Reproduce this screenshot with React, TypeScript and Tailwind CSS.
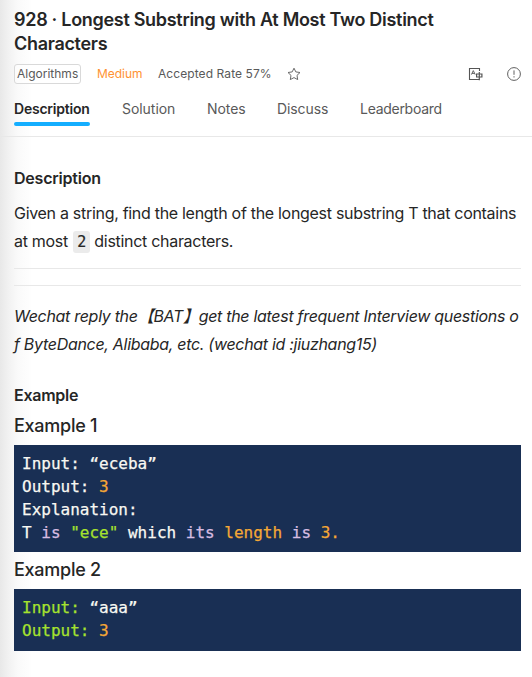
import React from "react";

const tabs = [
  { name: "Solution", cls: "ml-8 w-[53px] tracking-[-0.05px]" },
  { name: "Notes", cls: "ml-8 w-[38px] tracking-[-0.05px]" },
  { name: "Discuss", cls: "ml-8 w-[51px] tracking-[-0.1px]" },
  { name: "Leaderboard", cls: "ml-8 w-[82px] tracking-[-0.28px]" },
];

function StarIcon() {
  return (
    <svg className="ml-[15px] h-[14px] w-[14px]" viewBox="0 0 14 14" fill="none" stroke="#6a6a6a" strokeWidth="1" strokeLinejoin="miter">
      <path d="M7 1.2 8.8 4.9 13 5.5 10 8.4 10.7 12.6 7 10.6 3.3 12.6 4 8.4 1 5.5 5.2 4.9Z" />
    </svg>
  );
}

function TranslateIcon() {
  return (
    <svg className="h-[16px] w-[16px]" viewBox="0 0 16 16" fill="none" stroke="#555">
      <path d="M12.5 5V2.5H2.5v11h10" strokeWidth="1.1" />
      <path d="M4.4 8.6 6.3 4.6 8.2 8.6M5 7.4h2.6" strokeWidth="0.9" />
      <path d="M9.6 8h5.3v3H9.6ZM12.3 6v8.2" strokeWidth="1.2" />
    </svg>
  );
}

function NoticeIcon() {
  return (
    <svg className="ml-[23px] h-[16px] w-[16px]" viewBox="0 0 16 16" fill="none" stroke="#606060">
      <circle cx="8" cy="8" r="6.4" strokeWidth="1" />
      <path d="M8 4.4v4.4M8 10.2v1.3" strokeWidth="1" />
    </svg>
  );
}

export default function App() {
  return (
    <div className="h-[677px] w-[532px] overflow-hidden whitespace-nowrap bg-[linear-gradient(to_right,#e8e8e8_0px,#f2f2f2_9px,#fafafa_18px,#fdfdfd_28px,#ffffff_32px)] font-['Inter','Noto_Sans_CJK_SC',sans-serif] text-[#262626]">
      <header className="flex h-[137px] flex-col border-b border-[#e8e8e8] pl-[14px] pt-2">
        <h1 className="text-[18px] font-semibold leading-6 tracking-[-0.3px]">
          928 · Longest Substring with At Most Two Distinct
          <br />
          Characters
        </h1>
        <div className="mt-2 flex h-5 items-center text-[12px] text-[#595959]">
          <span className="flex h-5 w-[67px] items-center rounded-[3px] border border-[#d9d9d9] bg-white/50 pl-[2px]">
            Algorithms
          </span>
          <span className="ml-4 w-[46px] tracking-[-0.05px] text-[#ff9232]">Medium</span>
          <span className="ml-[15px] w-[114px] tracking-[0.08px]">Accepted Rate 57%</span>
          <StarIcon />
          <div className="ml-auto mr-[10px] flex items-center">
            <TranslateIcon />
            <NoticeIcon />
          </div>
        </div>
        <nav className="mt-[15px] flex text-[14px] leading-5 text-[#595959]">
          <div className="w-[76px]">
            <span className="font-semibold text-[#262626] tracking-[-0.22px]">Description</span>
            <div className="mt-[3px] h-1 rounded-full bg-[#14aeff]" />
          </div>
          {tabs.map((tab) => (
            <span key={tab.name} className={tab.cls}>{tab.name}</span>
          ))}
        </nav>
      </header>

      <main className="pl-[14px] pr-[11px] pt-[29px]">
        <h2 className="text-[16px] font-semibold leading-6 tracking-[-0.22px]">Description</h2>
        <p className="mt-[9px] text-[16px] leading-7 tracking-[-0.3px]">
          Given a string, find the length of the longest substring T that contains
          <br />
          at most{" "}
          <code className="ml-[1px] rounded-[3px] bg-[#ebebeb] px-[4px] py-[2px] font-['DejaVu_Sans_Mono',monospace] text-[15px] tracking-normal [-webkit-text-stroke:0.2px]">2</code>{" "}
          distinct characters.
        </p>
        <div className="mt-3 h-[18px] border-y border-[#e8e8e8]" />
        <p className="mt-4 text-[16px] italic leading-7 tracking-[-0.3px]">
          Wechat reply the【BAT】get the latest frequent Interview questions o
          <br />
          f ByteDance, Alibaba, etc. (wechat id :jiuzhang15)
        </p>
        <h2 className="mt-[25px] text-[16px] font-semibold leading-6 tracking-[-0.25px]">Example</h2>
        <h3 className="mt-[7px] text-[18px] font-medium leading-6 tracking-[-0.25px]">Example 1</h3>
        <pre className="mt-[7px] h-[107px] bg-[#192f54] px-2 pt-[7px] font-['DejaVu_Sans_Mono',monospace] text-[16px] leading-[23px] text-[#f8f8f2] [-webkit-text-stroke:0.25px]">
          {"Input: “eceba”\nOutput: "}
          <span className="text-[#f5a836]">3</span>
          {"\nExplanation:\nT "}
          <span className="text-[#d7bde2]">is</span>{" "}
          <span className="text-[#a6e22e]">"ece"</span>
          {" which "}
          <span className="text-[#d7bde2]">its</span>{" "}
          <span className="text-[#f5a836]">length</span>{" "}
          <span className="text-[#d7bde2]">is</span>{" "}
          <span className="text-[#f5a836]">3.</span>
        </pre>
        <h3 className="mt-[6px] text-[18px] font-medium leading-6 tracking-[-0.25px]">Example 2</h3>
        <pre className="mt-[7px] h-[62px] bg-[#192f54] px-2 pt-[7px] font-['DejaVu_Sans_Mono',monospace] text-[16px] leading-[23px] text-[#f8f8f2] [-webkit-text-stroke:0.25px]">
          <span className="text-[#a6e22e]">Input:</span>
          {" “aaa”\n"}
          <span className="text-[#a6e22e]">Output:</span>{" "}
          <span className="text-[#f5a836]">3</span>
        </pre>
      </main>
    </div>
  );
}
